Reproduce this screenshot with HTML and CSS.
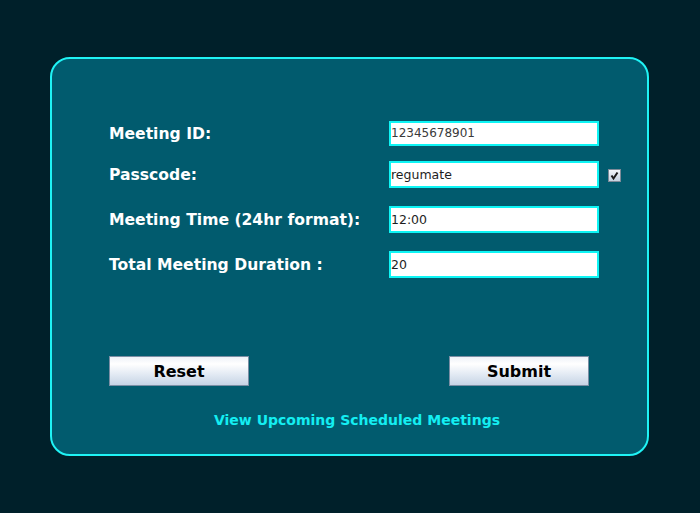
FILE: index.html
```html
<!DOCTYPE html>
<html>
<head>
<meta charset="utf-8">
<link rel="stylesheet" href="styles.css">
</head>
<body>
<div class="card">
  <div class="form">
    <div class="row r1">
      <span class="label">Meeting ID:</span>
      <span class="field f1">12345678901</span>
    </div>
    <div class="row r2">
      <span class="label">Passcode:</span>
      <span class="field">regumate</span>
      <span class="check"><svg width="13" height="13" viewBox="0 0 13 13"><defs><linearGradient id="g" x1="0" y1="0" x2="0" y2="1"><stop offset="0" stop-color="#f4f7fb"/><stop offset="1" stop-color="#c3d0df"/></linearGradient></defs><rect x="0.5" y="0.5" width="12" height="12" fill="url(#g)" stroke="#7d8a98"/><path d="M3.5 6.5 L5.5 9.5 L9.5 3.5" fill="none" stroke="#1a1a1a" stroke-width="2"/></svg></span>
    </div>
    <div class="row r3">
      <span class="label">Meeting Time (24hr format):</span>
      <span class="field">12:00</span>
    </div>
    <div class="row r4">
      <span class="label">Total Meeting Duration :</span>
      <span class="field">20</span>
    </div>
  </div>
  <div class="buttons">
    <button class="btn">Reset</button>
    <button class="btn">Submit</button>
  </div>
  <div class="link">View Upcoming Scheduled Meetings</div>
</div>
</body>
</html>
```
FILE: styles.css
```css
html, body {
  margin: 0;
  padding: 0;
}
body {
  background: #00202a;
  width: 700px;
  height: 513px;
  overflow: hidden;
  font-family: "DejaVu Sans", sans-serif;
}
.card {
  box-sizing: border-box;
  margin: 57px 0 0 50px;
  width: 599px;
  height: 399px;
  border: 2px solid #1ff3f5;
  border-radius: 20px;
  background: #015b6e;
  padding: 62px 0 0 57px;
}
.form {
  display: flex;
  flex-direction: column;
  gap: 18px;
}
.row {
  display: flex;
  align-items: center;
  height: 27px;
}
.r1 { height: 25px; margin-bottom: -3px; }
.label {
  width: 280px;
  color: #ffffff;
  font-size: 15.6px;
  font-weight: bold;
  padding-top: 1px;
}
.field {
  box-sizing: border-box;
  width: 210px;
  height: 27px;
  border: 2px solid #0ef5f5;
  background: #ffffff;
  color: #1e1e1e;
  font-size: 12.5px;
  padding-left: 0px;
  line-height: 23px;
}
.f1 {
  height: 25px;
  line-height: 21px;
  color: #3a3a3a;
  font-size: 12px;
}
.check {
  margin-left: 9px;
  display: flex;
  margin-top: 2px;
}
.buttons {
  display: flex;
  justify-content: space-between;
  width: 480px;
  margin-top: 78px;
}
.btn {
  box-sizing: border-box;
  width: 140px;
  height: 30px;
  border: 1px solid #7b8ea4;
  background: linear-gradient(#eef2f8 0%, #ffffff 25%, #e4ebf4 60%, #c6d4e5 100%);
  font-family: "DejaVu Sans", sans-serif;
  font-weight: bold;
  font-size: 16px;
  color: #000;
  padding: 0;
}
.link {
  text-align: center;
  width: 594px;
  margin-left: -49px;
  margin-top: 26px;
  color: #14eef2;
  font-weight: bold;
  font-size: 14px;
}
```
